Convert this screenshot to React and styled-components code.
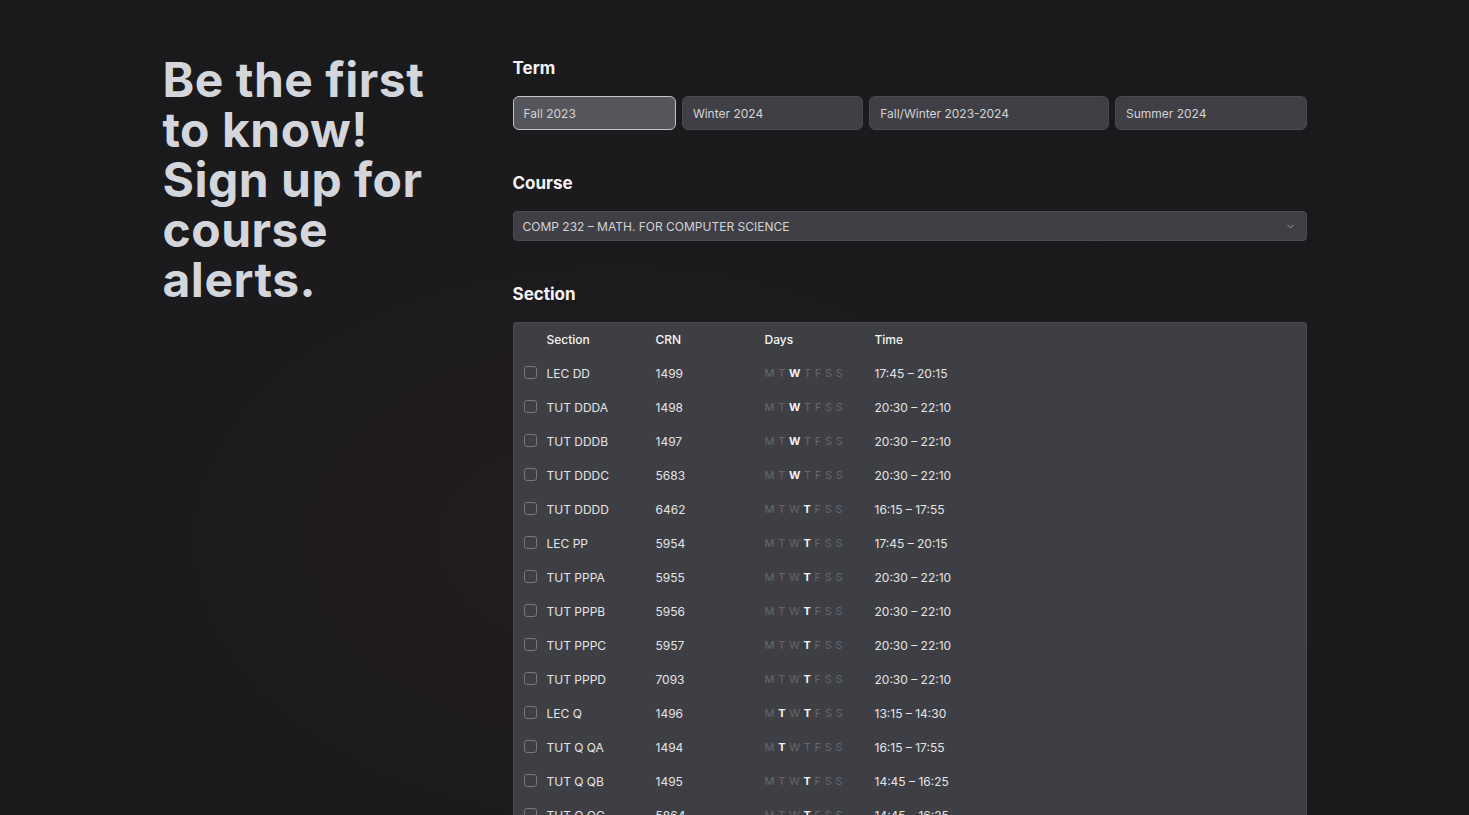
import React from "react";
import styled, { createGlobalStyle } from "styled-components";
import { ChevronDown } from "lucide-react";

const Global = createGlobalStyle`
  html, body { margin: 0; padding: 0; }
  html::-webkit-scrollbar, body::-webkit-scrollbar { display: none; }
  html { scrollbar-width: none; }
  body {
    background: #1a1a1c;
    font-family: Inter, "Noto Sans", sans-serif;
    color: #e4e4e7;
  }
`;

const Page = styled.div`
  min-height: 815px;
  background: radial-gradient(ellipse 55% 60% at 42% 62%, #221c1f 0%, #1c1a1d 55%, #1a1a1c 100%);
`;

const Container = styled.div`
  max-width: 1144px;
  margin: 0 auto;
  padding-top: 55px;
  display: grid;
  grid-template-columns: 300px 1fr;
  column-gap: 50px;
`;

const Hero = styled.h1`
  margin: 0;
  font-size: 48px;
  line-height: 50px;
  font-weight: 700;
  color: #d4d6dc;
  letter-spacing: 0.5px;
`;

const Form = styled.div`
  display: flex;
  flex-direction: column;
`;

const Field = styled.div`
  display: flex;
  flex-direction: column;
  margin-bottom: 40px;
`;

const Label = styled.div`
  font-size: 17px;
  line-height: 24px;
  font-weight: 700;
  color: #f4f4f5;
  padding-top: 1px;
  margin-bottom: 16px;
`;

const TermRow = styled.div`
  display: flex;
  gap: 6px;
`;

const TermButton = styled.button`
  flex: 1 1 auto;
  height: 34px;
  text-align: left;
  padding: 0 10px;
  border-radius: 6px;
  font-family: inherit;
  font-size: 12px;
  color: #d4d4d8;
  background: ${(p) => (p.$active ? "#55555c" : "#3f3f45")};
  border: 1px solid ${(p) => (p.$active ? "#c4c4c8" : "#4a4a51")};
`;

const Select = styled.div`
  height: 30px;
  box-sizing: border-box;
  display: flex;
  align-items: center;
  justify-content: space-between;
  padding: 0 10px 0 9px;
  background: #3f3f45;
  border: 1px solid #4a4a51;
  border-radius: 4px;
  font-size: 12px;
  color: #d4d4d8;
  text-transform: uppercase;
  svg { color: #a1a1aa; }
`;

const Table = styled.div`
  background: #3e3f44;
  border: 1px solid #4c4d53;
  border-bottom: none;
  border-radius: 4px 4px 0 0;
`;

const Row = styled.div`
  display: grid;
  grid-template-columns: 33px 109px 109px 110px 1fr;
  box-sizing: border-box;
  height: 34px;
  padding-bottom: 2px;
  align-items: center;
  font-size: 12px;
  color: ${(p) => (p.$head ? "#f4f4f5" : "#e4e4e7")};
  font-weight: ${(p) => (p.$head ? 500 : 400)};
`;

const Check = styled.span`
  width: 11px;
  height: 11px;
  margin-left: 10px;
  margin-top: -2px;
  border: 1px solid #76767d;
  border-radius: 3px;
`;

const Days = styled.div`
  display: flex;
  gap: 3.7px;
  font-size: 11px;
`;

const Day = styled.span`
  color: ${(p) => (p.$on ? "#f4f4f5" : "#66666d")};
  font-weight: ${(p) => (p.$on ? 700 : 400)};
`;

const terms = ["Fall 2023", "Winter 2024", "Fall/Winter 2023-2024", "Summer 2024"];
const letters = ["M", "T", "W", "T", "F", "S", "S"];

const rows = [
  ["LEC DD", "1499", [2], "17:45 – 20:15"],
  ["TUT DDDA", "1498", [2], "20:30 – 22:10"],
  ["TUT DDDB", "1497", [2], "20:30 – 22:10"],
  ["TUT DDDC", "5683", [2], "20:30 – 22:10"],
  ["TUT DDDD", "6462", [3], "16:15 – 17:55"],
  ["LEC PP", "5954", [3], "17:45 – 20:15"],
  ["TUT PPPA", "5955", [3], "20:30 – 22:10"],
  ["TUT PPPB", "5956", [3], "20:30 – 22:10"],
  ["TUT PPPC", "5957", [3], "20:30 – 22:10"],
  ["TUT PPPD", "7093", [3], "20:30 – 22:10"],
  ["LEC Q", "1496", [1, 3], "13:15 – 14:30"],
  ["TUT Q QA", "1494", [1], "16:15 – 17:55"],
  ["TUT Q QB", "1495", [3], "14:45 – 16:25"],
  ["TUT Q QC", "5864", [3], "14:45 – 16:25"],
];

export default function App() {
  return (
    <Page>
      <Global />
      <Container>
        <Hero>Be the first to know! Sign up for course alerts.</Hero>
        <Form>
          <Field>
            <Label>Term</Label>
            <TermRow>
              {terms.map((t, i) => (
                <TermButton key={t} $active={i === 0}>{t}</TermButton>
              ))}
            </TermRow>
          </Field>
          <Field>
            <Label>Course</Label>
            <Select>
              <span>COMP 232 – Math. for Computer Science</span>
              <ChevronDown size={11} strokeWidth={2} />
            </Select>
          </Field>
          <Field>
            <Label>Section</Label>
            <Table>
              <Row $head>
                <span />
                <span>Section</span>
                <span>CRN</span>
                <span>Days</span>
                <span>Time</span>
              </Row>
              {rows.map(([s, crn, on, time]) => (
                <Row key={s}>
                  <Check />
                  <span>{s}</span>
                  <span>{crn}</span>
                  <Days>
                    {letters.map((l, i) => (
                      <Day key={i} $on={on.includes(i)}>{l}</Day>
                    ))}
                  </Days>
                  <span>{time}</span>
                </Row>
              ))}
            </Table>
          </Field>
        </Form>
      </Container>
    </Page>
  );
}
